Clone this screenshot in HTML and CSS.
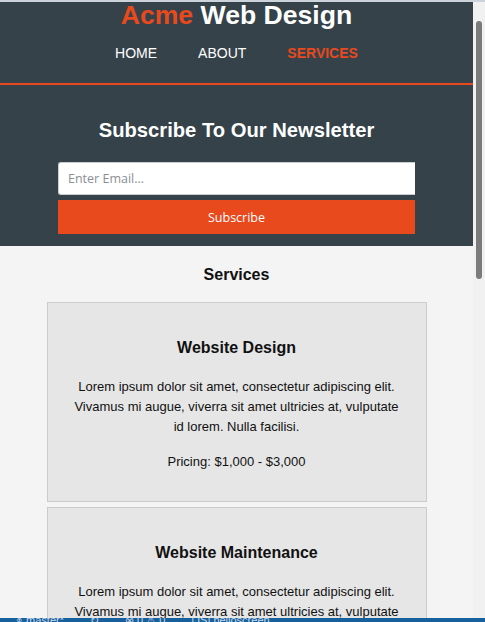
FILE: index.html
```html
<!DOCTYPE html>
<html lang="en">
<head>
<meta charset="utf-8">
<title>Acme Web Design | Services</title>
<link rel="stylesheet" href="styles.css">
</head>
<body>
  <div class="topline"></div>
  <div class="frame">
    <div class="page">
      <header class="site-header">
        <h1 class="branding"><span class="highlight">Acme</span> Web Design</h1>
        <nav>
          <ul class="nav-list">
            <li><a href="#">Home</a></li>
            <li><a href="#">About</a></li>
            <li class="current"><a href="#">Services</a></li>
          </ul>
        </nav>
      </header>

      <section class="newsletter">
        <h1 class="newsletter-title">Subscribe To Our Newsletter</h1>
        <form class="newsletter-form">
          <input class="email" type="email" placeholder="Enter Email...">
          <button class="subscribe" type="button">Subscribe</button>
        </form>
      </section>

      <section class="services">
        <h1 class="services-title">Services</h1>
        <div class="box">
          <h3 class="box-title">Website Design</h3>
          <p>Lorem ipsum dolor sit amet, consectetur adipiscing elit. Vivamus mi augue, viverra sit amet ultricies at, vulputate id lorem. Nulla facilisi.</p>
          <p>Pricing: $1,000 - $3,000</p>
        </div>
        <div class="box">
          <h3 class="box-title">Website Maintenance</h3>
          <p>Lorem ipsum dolor sit amet, consectetur adipiscing elit. Vivamus mi augue, viverra sit amet ultricies at, vulputate id lorem. Nulla facilisi.</p>
          <p>Pricing: $250 per month</p>
        </div>
        <div class="box">
          <h3 class="box-title">Website Hosting</h3>
          <p>Lorem ipsum dolor sit amet, consectetur adipiscing elit. Vivamus mi augue, viverra sit amet ultricies at, vulputate id lorem. Nulla facilisi.</p>
          <p>Pricing: $25 per month</p>
        </div>
      </section>
    </div>
    <div class="scrollbar"><div class="thumb"></div></div>
  </div>
  <div class="statusbar">
    <div class="status-text">
      <span class="status-item">&#5860; master*</span>
      <span class="status-item">&#8635;</span>
      <span class="status-item">&#8855; 0 &#9888; 0</span>
      <span class="status-item">[JS] helloscreen</span>
    </div>
  </div>
</body>
</html>
```

FILE: styles.css
```css
html, body {
  margin: 0;
  height: 622px;
  overflow: hidden;
}

body {
  display: flex;
  flex-direction: column;
  background: #f4f4f4;
  font-family: "Liberation Sans", Arial, sans-serif;
  color: #111;
}

.topline {
  flex: none;
  height: 2px;
  background: #cdd3db;
}

.frame {
  flex: 1;
  min-height: 0;
  display: flex;
  overflow: hidden;
}

.page {
  flex: none;
  width: 473px;
  overflow: hidden;
}

.scrollbar {
  flex: none;
  width: 12px;
  background: #f1f1f1;
}

.thumb {
  width: 6px;
  height: 258px;
  margin: 19px 0 0 3px;
  background: #7b7b7b;
  border-radius: 3px;
}

/* Header */
.site-header {
  background: #35424a;
  border-bottom: 2px solid #e8491d;
  padding-bottom: 19px;
  text-align: center;
}

.branding {
  margin: 0;
  font-size: 26.6px;
  line-height: 26px;
  font-weight: bold;
  color: #fff;
}

.highlight {
  color: #e8491d;
}

.nav-list {
  margin: 15px 0 0;
  padding: 0;
  list-style: none;
  display: flex;
  justify-content: center;
  gap: 41px;
  font-size: 14px;
  line-height: 21px;
}

.nav-list a {
  color: #fff;
  text-decoration: none;
  text-transform: uppercase;
}

.nav-list .current a {
  color: #e8491d;
  font-weight: bold;
}

/* Newsletter */
.newsletter {
  background: #35424a;
  color: #fff;
  padding: 30px 0 12px;
  text-align: center;
}

.newsletter-title {
  margin: 0 0 17px;
  font-size: 20.2px;
  line-height: 30px;
  font-weight: bold;
}

.newsletter-form {
  width: 357px;
  margin: 0 auto;
  display: flex;
  flex-direction: column;
  gap: 5px;
}

.email {
  box-sizing: border-box;
  height: 33px;
  margin: 0;
  padding: 0 9px;
  border: 1px solid #c9cdd1;
  border-right: none;
  border-radius: 3px 0 0 3px;
  background: #fff;
  font-family: "Open Sans", "Noto Sans", sans-serif;
  font-size: 12.5px;
  outline: none;
}

.email::placeholder {
  color: #8a8f94;
}

.subscribe {
  height: 34px;
  margin: 0;
  border: 0;
  background: #e8491d;
  color: #fff;
  font-family: "Open Sans", "Noto Sans", sans-serif;
  font-size: 12.5px;
}

/* Services */
.services {
  padding-top: 17px;
}

.services-title {
  margin: 0 0 15px;
  font-size: 16px;
  line-height: 24px;
  text-align: center;
}

.box {
  box-sizing: border-box;
  width: 380px;
  margin: 0 auto 5px;
  padding: 33px 22px 29px;
  background: #e6e6e6;
  border: 1px solid #ccc;
  text-align: center;
}

.box-title {
  margin: 0 0 17px;
  font-size: 16px;
  line-height: 24px;
}

.box p {
  margin: 0 0 15px;
  font-size: 13px;
  line-height: 20px;
}

.box p:last-child {
  margin-bottom: 0;
}

/* Status bar */
.statusbar {
  flex: none;
  height: 4px;
  overflow: hidden;
  background: #16609e;
}

.status-text {
  display: flex;
  margin-top: -4px;
  padding-left: 16px;
  font-family: "Liberation Sans", Arial, sans-serif;
  font-size: 11px;
  line-height: 12px;
  color: #c9d7e6;
  white-space: nowrap;
}

.status-item {
  margin-right: 26px;
}
```
